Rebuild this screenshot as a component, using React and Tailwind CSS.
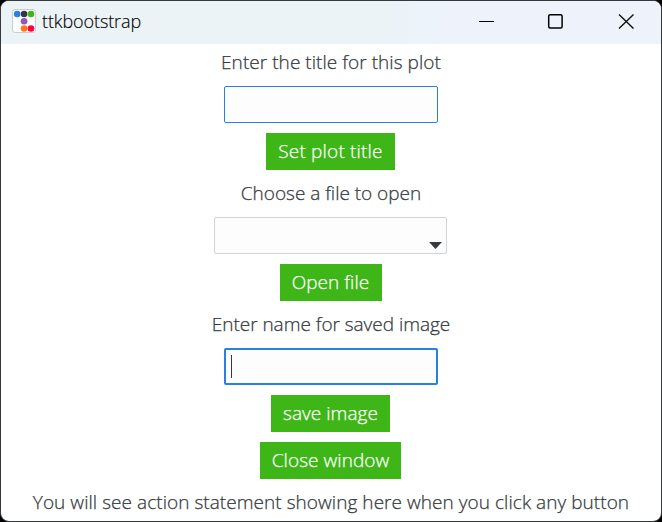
const label = "h-[27px] flex items-center justify-center whitespace-pre text-[#343a40]";
const button =
  "h-[37px] flex items-center justify-center whitespace-pre bg-[#3fb618] text-white";

function AppIcon() {
  return (
    <svg className="h-6 w-6" viewBox="0 0 24 24">
      <rect x="0.5" y="0.5" width="23" height="23" rx="2.5" fill="#fdfdfe" stroke="#c9ced2" />
      <circle cx="5.2" cy="5" r="3.3" fill="#2780e3" />
      <circle cx="12.1" cy="5" r="3.3" fill="#373a3c" />
      <circle cx="19" cy="5" r="3.3" fill="#3fb618" />
      <circle cx="12.1" cy="12.2" r="3.3" fill="#9954bb" />
      <circle cx="12.1" cy="19.5" r="3.3" fill="#ff7518" />
      <circle cx="19" cy="19.5" r="3.3" fill="#ff0039" />
    </svg>
  );
}

function TitleBar() {
  return (
    <header className="flex h-[43px] shrink-0 items-center bg-linear-to-r from-[#ebf3f7] from-58% to-[#eef3fb] to-68% pb-[3px] pl-[11px]">
      <AppIcon />
      <span className="ml-[6px] text-[18px] leading-[24px] font-light tracking-[-0.1px] text-black [-webkit-text-stroke:0.15px_#000]">ttkbootstrap</span>
      <svg className="mr-[26px] ml-auto h-4 w-[157px]" viewBox="0 0 157 16" fill="none" stroke="#111">
        <path d="M1 8.5H16" stroke="#000" strokeWidth="1" />
        <rect x="70.7" y="1.7" width="13.4" height="13.4" rx="1.5" stroke="#000" strokeWidth="1.5" />
        <path d="M141 1.5L155.5 15.5M155.5 1.5L141 15.5" strokeWidth="1.4" />
      </svg>
    </header>
  );
}

export default function App() {
  return (
    <div className="h-[522px] w-[662px] bg-black font-['Open_Sans','Noto_Sans',sans-serif]">
      <div className="flex h-[522px] w-[662px] flex-col overflow-hidden rounded-[9px] border border-[#36393b] bg-white">
        <TitleBar />
        <main className="flex flex-col items-center gap-[10px] pt-[5px] text-[19px] leading-[27px] font-light tracking-[0.05px] [-webkit-text-stroke-width:0.25px]">
          <div className={label}>Enter the title for this plot</div>
          <div className="mr-px h-[37px] w-[214px] rounded-[2px] border border-[#2780e3] bg-[#fdfdfe]" />
          <div className={`${button} mr-px w-[129px] tracking-[0.18px]`}>Set plot title</div>
          <div className={`${label} tracking-[-0.02px]`}>Choose a file to open</div>
          <div className="mr-px flex h-[37px] w-[233px] items-end justify-end rounded-[2px] border border-[#ced4da] bg-[#fdfdfe] pr-[4px] pb-[4px]">
            <svg className="h-[7px] w-[13px]" viewBox="0 0 13 7">
              <path d="M0 0H13L6.5 7Z" fill="#373a3c" />
            </svg>
          </div>
          <div className={`${button} mr-px w-[102px]`}>Open file</div>
          <div className={`${label} tracking-[-0.03px]`}>Enter name for saved image</div>
          <div className="mr-px flex h-[37px] w-[214px] items-center rounded-[2px] border-2 border-[#2780e3] bg-[#fdfdfe] pl-[5px]">
            <div className="h-[23px] w-px bg-[#373a3c]" />
          </div>
          <div className={`${button} mr-px w-[119px]`}>save image</div>
          <div className={`${button} mr-px w-[141px]`}>Close window</div>
          <div className={label}>You will see action statement showing here when you click any button</div>
        </main>
      </div>
    </div>
  );
}
